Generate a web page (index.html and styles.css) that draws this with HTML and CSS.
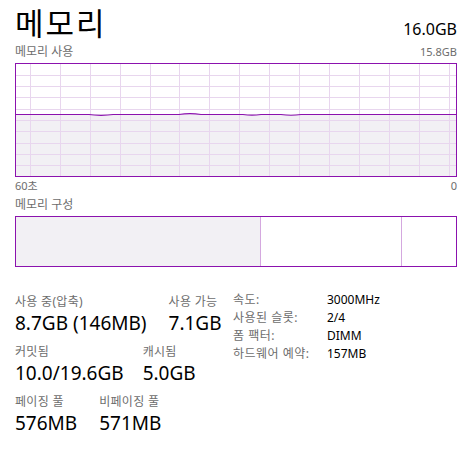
FILE: index.html
```html
<!DOCTYPE html>
<html lang="ko">
<head>
<meta charset="utf-8">
<title>메모리</title>
<link rel="stylesheet" href="styles.css">
</head>
<body>
<div class="page">
  <div class="header">
    <div class="title">메모리</div>
    <div class="total">16.0GB</div>
  </div>
  <div class="caption-row">
    <span>메모리 사용</span>
    <span class="small">15.8GB</span>
  </div>
  <svg class="graph" width="442" height="114" viewBox="0 0 442 114">
    <rect x="0" y="51" width="442" height="63" fill="#f2f0f4"/>
    <g stroke="#e8d6ee" stroke-width="1">
      <line x1="15.5" y1="0" x2="15.5" y2="114"/>
      <line x1="45.5" y1="0" x2="45.5" y2="114"/>
      <line x1="75.5" y1="0" x2="75.5" y2="114"/>
      <line x1="105.5" y1="0" x2="105.5" y2="114"/>
      <line x1="135.5" y1="0" x2="135.5" y2="114"/>
      <line x1="164.5" y1="0" x2="164.5" y2="114"/>
      <line x1="194.5" y1="0" x2="194.5" y2="114"/>
      <line x1="224.5" y1="0" x2="224.5" y2="114"/>
      <line x1="254.5" y1="0" x2="254.5" y2="114"/>
      <line x1="284.5" y1="0" x2="284.5" y2="114"/>
      <line x1="314.5" y1="0" x2="314.5" y2="114"/>
      <line x1="344.5" y1="0" x2="344.5" y2="114"/>
      <line x1="374.5" y1="0" x2="374.5" y2="114"/>
      <line x1="404.5" y1="0" x2="404.5" y2="114"/>
      <line x1="434.5" y1="0" x2="434.5" y2="114"/>
      <line x1="0" y1="12.5" x2="442" y2="12.5"/>
      <line x1="0" y1="23.5" x2="442" y2="23.5"/>
      <line x1="0" y1="34.5" x2="442" y2="34.5"/>
      <line x1="0" y1="46.5" x2="442" y2="46.5"/>
      <line x1="0" y1="57.5" x2="442" y2="57.5"/>
      <line x1="0" y1="68.5" x2="442" y2="68.5"/>
      <line x1="0" y1="80.5" x2="442" y2="80.5"/>
      <line x1="0" y1="91.5" x2="442" y2="91.5"/>
      <line x1="0" y1="102.5" x2="442" y2="102.5"/>
    </g>
    <path d="M0,51.5 L74,51.5 C80,52.6 92,52.6 98,51.5 L164,51.5 C170,50.6 180,50.6 186,51.5 L228,51.5 C234,52.4 240,52.4 246,51.5 L266,51.5 C272,52.4 280,52.4 286,51.5 L442,51.5" fill="none" stroke="#8b12ae" stroke-width="1.2"/>
    <rect x="0.5" y="0.5" width="441" height="113" fill="none" stroke="#8b12ae" stroke-width="1"/>
  </svg>
  <div class="axis-row">
    <span>60초</span>
    <span>0</span>
  </div>
  <div class="caption-row comp-caption">
    <span>메모리 구성</span>
  </div>
  <div class="composition">
    <div class="seg seg-used" style="width:244px"></div>
    <div class="seg seg-standby" style="width:140px"></div>
    <div class="seg seg-free"></div>
  </div>
  <div class="stats">
    <div class="stats-left">
      <div class="stat-row">
        <div class="stat">
          <div class="label">사용 중(압축)</div>
          <div class="value">8.7GB (146MB)</div>
        </div>
        <div class="stat">
          <div class="label">사용 가능</div>
          <div class="value">7.1GB</div>
        </div>
      </div>
      <div class="stat-row stat-row-tight">
        <div class="stat">
          <div class="label">커밋됨</div>
          <div class="value">10.0/19.6GB</div>
        </div>
        <div class="stat">
          <div class="label">캐시됨</div>
          <div class="value">5.0GB</div>
        </div>
      </div>
      <div class="stat-row">
        <div class="stat">
          <div class="label">페이징 풀</div>
          <div class="value">576MB</div>
        </div>
        <div class="stat">
          <div class="label">비페이징 풀</div>
          <div class="value">571MB</div>
        </div>
      </div>
    </div>
    <div class="stats-right">
      <span class="k">속도:</span><span class="v">3000MHz</span>
      <span class="k">사용된 슬롯:</span><span class="v">2/4</span>
      <span class="k">폼 팩터:</span><span class="v">DIMM</span>
      <span class="k">하드웨어 예약:</span><span class="v">157MB</span>
    </div>
  </div>
</div>
</body>
</html>
```

FILE: styles.css
```css
html, body {
  margin: 0;
  padding: 0;
  background: #ffffff;
}
body {
  font-family: "Noto Sans", "Noto Sans CJK KR", sans-serif;
  color: #000000;
}
.page {
  padding: 0 15px;
  width: 442px;
}
.header {
  display: flex;
  justify-content: space-between;
  align-items: baseline;
  height: 44px;
}
.title {
  font-size: 31px;
  line-height: 44px;
  letter-spacing: 2px;
  font-family: "Noto Sans CJK KR", sans-serif;
}
.total {
  font-size: 16px;
  line-height: 44px;
}
.caption-row {
  display: flex;
  justify-content: space-between;
  align-items: baseline;
  font-size: 12px;
  line-height: 16px;
  color: #6d6d6d;
  height: 19px;
}
.caption-row .small {
  font-size: 11px;
}
.graph {
  display: block;
}
.axis-row {
  display: flex;
  justify-content: space-between;
  font-size: 11px;
  line-height: 16px;
  color: #6d6d6d;
  height: 19px;
  padding-top: 1px;
}
.comp-caption {
  height: 19px;
}
.composition {
  display: flex;
  height: 49px;
  border: 1px solid #8b12ae;
}
.seg {
  height: 100%;
}
.seg-used {
  background: #f2f0f4;
  border-right: 1px solid #d4a8df;
}
.seg-standby {
  border-right: 1px solid #d4a8df;
}
.seg-free {
  flex: 1;
}
.stats {
  display: flex;
  margin-top: 27px;
}
.stats-left {
  width: 218px;
  display: flex;
  flex-direction: column;
}
.stat-row {
  display: flex;
  gap: 22px;
  height: 50px;
}
.stat-row-tight {
  gap: 19px;
}
.label {
  font-size: 12px;
  line-height: 16px;
  color: #6d6d6d;
  white-space: nowrap;
  letter-spacing: 0.3px;
}
.value {
  font-size: 19px;
  line-height: 26px;
  white-space: nowrap;
}
.stats-right {
  display: grid;
  grid-template-columns: 94px auto;
  grid-auto-rows: 18px;
  font-size: 12px;
  line-height: 18px;
  margin-top: -3px;
  align-content: start;
}
.stats-right .k {
  color: #6d6d6d;
  white-space: nowrap;
  letter-spacing: 0.5px;
}
.stats-right .v {
  color: #000000;
}
```
